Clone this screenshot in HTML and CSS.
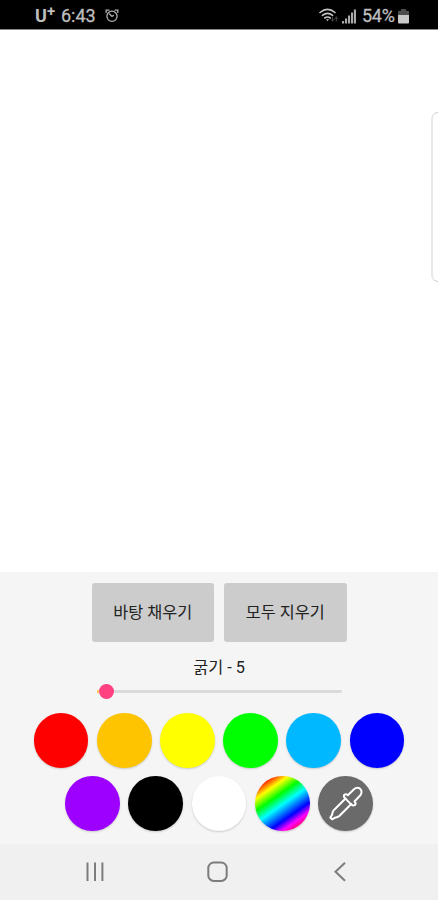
FILE: index.html
```html
<!DOCTYPE html>
<html lang="ko">
<head>
<meta charset="utf-8">
<meta name="viewport" content="width=device-width, initial-scale=1">
<title>그림판</title>
<link rel="stylesheet" href="styles.css">
</head>
<body>
<header class="status">
  <div class="status-left">
    <span class="carrier"><span class="carrier-u">U</span><span class="carrier-plus">+</span></span>
    <span class="clock">6:43</span>
    <svg class="alarm" width="14" height="14" viewBox="0 0 14 14" fill="none" stroke="#b0b0b0" stroke-width="1.3" stroke-linecap="round">
      <circle cx="7" cy="7.3" r="5.1"/><path d="M1.2 3.4V1.2H4M12.8 3.4V1.2H10M4.6 5L7 7.5L8.4 6.5"/>
    </svg>
  </div>
  <div class="status-right">
    <svg class="wifi" width="20" height="16" viewBox="0 0 20 16" fill="none" stroke="#c4c4c4" stroke-width="1.6" stroke-linecap="round">
      <path d="M1 4.5Q8.5-1.6 16 4.5M3.4 7.3Q8.5 3.4 13.6 7.3M5.8 10Q8.5 8 11.2 10"/>
      <path d="M7 11.2H10L8.5 13.2Z" fill="#c4c4c4" stroke="none"/>
      <path d="M13.5 9V13M12 11.5L13.5 13L15 11.5M17.3 13V9M15.8 10.5L17.3 9L18.8 10.5" stroke="#484848" stroke-width="1"/>
    </svg>
    <svg class="signal" width="14" height="15" viewBox="0 0 14 15" fill="#a9a9a9">
      <path d="M0 12h2.1v2.5H0zM3 9.5h2.1v5H3zM6 6.5h2.1v8H6zM9 3.5h2.1v11H9zM11.9 .5H14v14H11.9z"/>
    </svg>
    <span class="percent">54%</span>
    <svg class="battery" width="11" height="15" viewBox="0 0 11 15">
      <path d="M3 0H8V1.8H10Q11 1.8 11 2.8V6H0V2.8Q0 1.8 1 1.8H3Z" fill="#4c4c4c"/>
      <path d="M0 6H11V13.5Q11 14.5 10 14.5H1Q0 14.5 0 13.5Z" fill="#c8c8c8"/>
    </svg>
  </div>
</header>
<main class="canvas"><div class="edge-handle"></div></main>
<section class="tools">
  <div class="actions">
    <button class="action">바탕 채우기</button>
    <button class="action">모두 지우기</button>
  </div>
  <div class="width-label">굵기 - 5</div>
  <div class="slider"><div class="fill"></div><div class="thumb"></div><div class="track"></div></div>
  <div class="palette">
    <div class="swatch red"></div><div class="swatch orange"></div><div class="swatch yellow"></div><div class="swatch green"></div><div class="swatch sky"></div><div class="swatch blue"></div>
  </div>
  <div class="palette">
    <div class="swatch purple"></div><div class="swatch black"></div><div class="swatch white"></div><div class="swatch rainbow"></div>
    <div class="swatch picker">
      <svg width="55" height="55" viewBox="0 0 55 55" fill="none" stroke="#fff" stroke-width="2" stroke-linejoin="round" stroke-linecap="round">
        <path d="M27.5 22.5L15.5 34.5Q14.5 36 14 39L12.3 41.5L14.2 43.3L17 41.7Q20 41.2 21.3 40L33.3 28"/>
        <path d="M26.3 18.8Q28 17.5 29.8 19.3L36 13.2Q38.5 11 41.5 12.2Q45 15 42.6 19L36.5 25.5Q38.4 27.3 37 29Q35.2 30.3 33.4 28.6L27 22.1Q25.2 20.3 26.3 18.8Z"/>
      </svg>
    </div>
  </div>
</section>
<nav class="navbar">
  <svg width="438" height="56" viewBox="0 0 438 56" fill="none" stroke="#7c7c7c" stroke-width="2">
    <path d="M87.5 18.5V37M95 18.5V37M102.4 18.5V37"/>
    <rect x="208.3" y="18.5" width="18.4" height="18.4" rx="5.5"/>
    <path d="M345 18.7L335.5 27.8L345 36.7"/>
  </svg>
</nav>
</body>
</html>
```
FILE: styles.css
```css
* { box-sizing: border-box; }
body {
  margin: 0;
  width: 438px;
  height: 900px;
  display: flex;
  flex-direction: column;
  overflow: hidden;
  background: #fff;
  font-family: Roboto, "Noto Sans CJK KR", sans-serif;
}
.status {
  flex: none;
  height: 30px;
  padding: 3px 29px 0 35px;
  display: flex;
  align-items: center;
  justify-content: space-between;
  background: #000;
  border-bottom: 1px solid #8b8788;
  color: #bebebe;
}
.status-left, .status-right { display: flex; align-items: center; }
.carrier {
  width: 26px;
  display: flex;
  align-items: flex-start;
  font-weight: 700;
}
.carrier-u { font-size: 18px; line-height: 26px; }
.carrier-plus { font-size: 15px; line-height: 16px; }
.clock { width: 44px; font-size: 18px; font-weight: 400; line-height: 26px; }
.wifi { margin-right: 3px; }
.signal { margin-right: 6px; }
.percent { width: 36px; font-size: 18px; font-weight: 400; letter-spacing: -.3px; line-height: 26px; white-space: nowrap; }
.clock, .percent { -webkit-text-stroke: .3px #bebebe; }
.canvas {
  flex: 1;
  display: flex;
  justify-content: flex-end;
  padding-top: 82px;
}
.edge-handle {
  width: 7px;
  height: 170px;
  border: 1px solid #d2d2d2;
  border-left: 2px solid #e8e8e8;
  border-right: 0;
  border-radius: 8px 0 0 8px;
}
.tools {
  flex: none;
  height: 272px;
  padding-top: 11px;
  background: #f5f5f5;
  display: flex;
  flex-direction: column;
  align-items: center;
}
.actions { display: flex; gap: 10px; }
.action {
  width: 122.5px;
  height: 58.5px;
  padding: 2px 0 0;
  border: 0;
  border-radius: 3px;
  background: #ccc;
  color: #222;
  font: 400 16.3px/56px Roboto, "Noto Sans CJK KR", sans-serif;
}
.width-label {
  height: 24px;
  margin-top: 14.5px;
  color: #222;
  font-size: 16.3px;
  line-height: 24px;
}
.slider {
  width: 245px;
  height: 16px;
  margin: 3px 0 14px;
  display: flex;
  align-items: center;
}
.fill { width: 2px; height: 3px; background: #ffc966; }
.thumb { width: 15px; height: 15px; border-radius: 50%; background: #ff4081; }
.track { flex: 1; height: 3px; background: #dadada; border-radius: 0 2px 2px 0; }
.palette { display: flex; gap: 8.5px; margin-bottom: 8.7px; }
.swatch {
  width: 54.7px;
  height: 54.7px;
  border-radius: 50%;
  box-shadow: 0 1px 2px rgba(0, 0, 0, .18);
}
.red { background: #f00; }
.orange { background: #ffc400; }
.yellow { background: #ff0; }
.green { background: #0f0; }
.sky { background: #00b8ff; }
.blue { background: #00f; }
.purple { background: #9d00ff; }
.black { background: #000; }
.white { background: #fff; }
.rainbow {
  background: linear-gradient(145deg, #f00 12%, #ff0 25%, #0f0 38%, #0ff 51%, #00f 69%, #f0f 79%, #f00 93%);
}
.picker { background: #6a6a6a; }
.picker svg { display: block; }
.navbar { flex: none; height: 56px; background: #f0f0f0; }
.navbar svg { display: block; }
```
